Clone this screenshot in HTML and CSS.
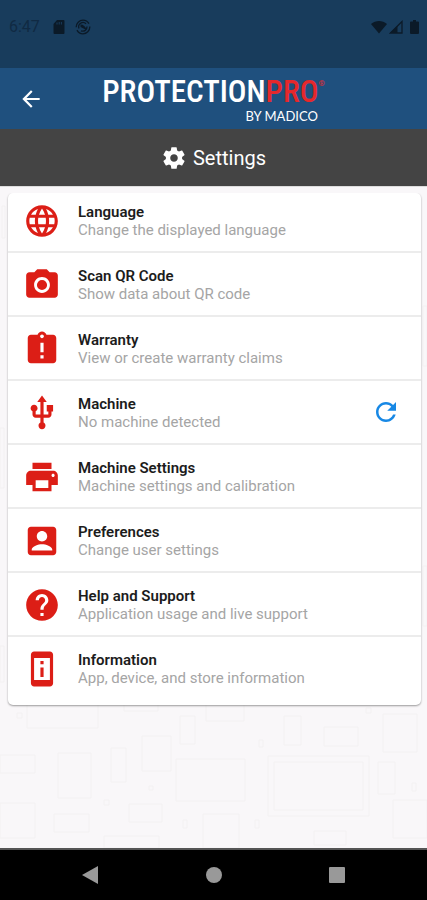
FILE: index.html
```html
<!DOCTYPE html>
<html lang="en">
<head>
<meta charset="utf-8">
<meta name="viewport" content="width=device-width, initial-scale=1">
<title>Settings</title>
<link rel="stylesheet" href="styles.css">
</head>
<body>
<div class="status">
  <span class="time">6:47</span>
  <svg class="status-icon sd" viewBox="0 0 12 14"><path d="M4 0h6.500q1 0 1 1v12q0 1-1 1h-9q-1 0-1-1V4z"/><path class="slot" d="M4 2.500v2M6.200 2v2.500M8.400 2v2.500"/></svg>
  <svg class="status-icon sync" viewBox="0 0 16 16"><circle cx="8" cy="8" r="6.800" fill="none" stroke="currentColor" stroke-width="1.300" stroke-dasharray="18 3"/><path d="M4 9.500a4.300 4.300 0 0 1 7-4.700M12 7.500a4.300 4.300 0 0 1-6 4.300" fill="none" stroke="currentColor" stroke-width="1.300"/><path d="M5.500 5.500c3 0 5 2 6 5l-2-.5-4-2z"/></svg>
  <span class="spacer"></span>
  <svg class="status-icon wifi" viewBox="0 0 16 14"><path d="M8 13.500L0 4C4.500 0 11.500 0 16 4z"/></svg>
  <svg class="status-icon signal" viewBox="0 0 14 14"><path d="M13 1.500V13H1.500z" fill="none" stroke="currentColor" stroke-width="1.300"/><path d="M8.500 6v7H1z"/></svg>
  <svg class="status-icon battery" viewBox="0 0 9 14"><path d="M3 0h3v1.500h2q1 0 1 1V13q0 1-1 1H1q-1 0-1-1V2.500q0-1 1-1h2z"/></svg>
</div>
<header class="appbar">
  <button class="back" type="button" aria-label="Back"><svg viewBox="0 0 24 24"><path d="M20 11H7.830l5.590-5.590L12 4l-8 8 8 8 1.410-1.410L7.830 13H20z"/></svg></button>
  <div class="brand">
    <div class="wordmark">PROTECTION<span class="pro">PRO</span><span class="mark">®</span></div>
    <div class="byline">BY MADICO</div>
  </div>
</header>
<div class="titlebar">
  <svg viewBox="0 0 24 24"><path d="M19.430 12.980c.04-.32.07-.64.07-.98s-.03-.66-.07-.98l2.110-1.650c.19-.15.24-.42.12-.64l-2-3.460c-.12-.22-.39-.3-.61-.22l-2.490 1c-.52-.4-1.080-.73-1.690-.98l-.38-2.650C14.460 2.180 14.250 2 14 2h-4c-.25 0-.46.18-.49.42l-.38 2.650c-.61.25-1.170.59-1.690.98l-2.490-1c-.23-.09-.49 0-.61.22l-2 3.460c-.13.22-.07.49.12.64l2.110 1.650c-.04.32-.07.65-.07.98s.03.66.07.98l-2.110 1.650c-.19.15-.24.42-.12.64l2 3.460c.12.22.39.3.61.22l2.490-1c.52.4 1.080.73 1.690.98l.38 2.650c.03.24.24.42.49.42h4c.25 0 .46-.18.49-.42l.38-2.650c.61-.25 1.170-.59 1.690-.98l2.490 1c.23.09.49 0 .61-.22l2-3.460c.12-.22.07-.49-.12-.64zM12 15.500c-1.930 0-3.500-1.570-3.500-3.500s1.570-3.500 3.500-3.500 3.500 1.570 3.500 3.500-1.570 3.500-3.500 3.500z"/></svg>
  <h1>Settings</h1>
</div>
<main class="content">
  <svg class="pattern" viewBox="0 0 427 662" preserveAspectRatio="xMidYMax slice" aria-hidden="true">
    <path d="M27 500h71v42H27zM124 500h34v25h-34zM180 530h15v28h-15zM206 500h38v35h-38zM0 569h35v18H0zM58 567h33v45H58zM111 562h15v34h-15zM142 550h29v35h-29zM176 573h69v42h-69zM0 617h35v35H0zM54 628h35v18H54zM129 618h33v18h-33zM203 628h36v34h-36zM284 530h17v29h-17zM324 541h34v19h-34zM383 528h34v38h-34zM268 570h101v60H268zM274 576h89v48h-89zM378 576h17v32h-17zM393 614h34v38h-34zM314 645h32v14h-32zM104 650h55v12h-55zM2 20h3v32H2zM0 242h4v60H0zM0 460h4v36H0zM423 120h4v60h-4zM423 380h4v60h-4z"/>
    <path d="M17 527h5v5h-5zM149 600h4v4h-4zM104 614h5v5h-5zM183 634h4v8h-4zM259 554h4v7h-4zM366 522h5v5h-5zM412 597h4v8h-4zM255 634h4v8h-4z"/>
  </svg>
  <ul class="card">
    <li class="row"><a href="#language">
      <svg viewBox="0 0 24 24"><path d="M11.990 2C6.470 2 2 6.480 2 12s4.470 10 9.990 10C17.520 22 22 17.520 22 12S17.520 2 11.990 2zm6.930 6h-2.950c-.32-1.250-.78-2.450-1.380-3.560 1.840.63 3.370 1.910 4.330 3.560zM12 4.040c.83 1.200 1.480 2.530 1.910 3.960h-3.820c.43-1.430 1.080-2.760 1.910-3.960zM4.260 14C4.100 13.360 4 12.690 4 12s.1-1.360.26-2h3.380c-.08.66-.14 1.320-.14 2s.06 1.340.14 2H4.260zm.82 2h2.950c.32 1.250.78 2.450 1.380 3.560-1.840-.63-3.370-1.900-4.330-3.560zm2.950-8H5.080c.96-1.660 2.490-2.930 4.330-3.560C8.810 5.550 8.350 6.750 8.030 8zM12 19.960c-.83-1.200-1.480-2.530-1.910-3.960h3.820c-.43 1.430-1.080 2.760-1.910 3.960zM14.340 14H9.660c-.09-.66-.16-1.320-.16-2s.07-1.350.16-2h4.680c.09.65.16 1.320.16 2s-.07 1.340-.16 2zm.25 5.560c.6-1.110 1.060-2.310 1.380-3.560h2.950c-.96 1.650-2.490 2.930-4.330 3.560zM16.360 14c.08-.66.14-1.320.14-2s-.06-1.340-.14-2h3.380c.16.64.26 1.310.26 2s-.1 1.360-.26 2h-3.380z"/></svg>
      <span class="text"><span class="name">Language</span><span class="desc">Change the displayed language</span></span></a></li>
    <li class="row"><a href="#scan">
      <svg viewBox="0 0 24 24"><path fill-rule="evenodd" d="M9 2L7.170 4H4c-1.100 0-2 .9-2 2v12c0 1.100.9 2 2 2h16c1.100 0 2-.9 2-2V6c0-1.100-.9-2-2-2h-3.170L15 2H9zm3 15c-2.760 0-5-2.240-5-5s2.240-5 5-5 5 2.240 5 5-2.240 5-5 5zM12 8.800a3.200 3.200 0 1 0 0 6.400 3.200 3.200 0 1 0 0-6.400z"/></svg>
      <span class="text"><span class="name">Scan QR Code</span><span class="desc">Show data about QR code</span></span></a></li>
    <li class="row"><a href="#warranty">
      <svg viewBox="0 0 24 24"><path d="M19 3h-4.180C14.400 1.840 13.300 1 12 1c-1.300 0-2.400.84-2.820 2H5c-1.100 0-2 .9-2 2v14c0 1.100.9 2 2 2h14c1.100 0 2-.9 2-2V5c0-1.100-.9-2-2-2zm-6 15h-2v-2h2v2zm0-4h-2V8h2v6zm-1-8.800c-.66 0-1.200-.54-1.200-1.200s.54-1.200 1.200-1.200 1.200.54 1.200 1.200-.54 1.200-1.200 1.200z"/></svg>
      <span class="text"><span class="name">Warranty</span><span class="desc">View or create warranty claims</span></span></a></li>
    <li class="row"><a href="#machine">
      <svg viewBox="0 0 24 24"><path d="M15 7v4h1v2h-3V5h2l-3-4-3 4h2v8H8v-2.070c.7-.37 1.200-1.080 1.200-1.930 0-1.210-.99-2.200-2.200-2.200-1.210 0-2.200.99-2.200 2.200 0 .85.5 1.560 1.200 1.930V13c0 1.110.89 2 2 2h3v3.050c-.71.37-1.200 1.100-1.200 1.950 0 1.220.99 2.200 2.200 2.200 1.210 0 2.200-.98 2.200-2.200 0-.85-.49-1.580-1.200-1.950V15h3c1.110 0 2-.89 2-2v-2h1V7h-4z"/></svg>
      <span class="text"><span class="name">Machine</span><span class="desc">No machine detected</span></span></a>
      <button class="refresh" type="button" aria-label="Refresh"><svg viewBox="0 0 24 24"><path d="M17.650 6.350C16.200 4.900 14.210 4 12 4c-4.420 0-7.990 3.580-7.990 8s3.570 8 7.990 8c3.730 0 6.840-2.550 7.730-6h-2.080c-.82 2.330-3.040 4-5.650 4-3.310 0-6-2.690-6-6s2.690-6 6-6c1.660 0 3.140.69 4.220 1.780L13 11h7V4l-2.350 2.350z"/></svg></button></li>
    <li class="row"><a href="#machine-settings">
      <svg viewBox="0 0 24 24"><path d="M19 8H5c-1.660 0-3 1.340-3 3v6h4v4h12v-4h4v-6c0-1.660-1.340-3-3-3zm-3 11H8v-5h8v5zm3-7c-.55 0-1-.45-1-1s.45-1 1-1 1 .45 1 1-.45 1-1 1zm-1-9H6v4h12V3z"/></svg>
      <span class="text"><span class="name">Machine Settings</span><span class="desc">Machine settings and calibration</span></span></a></li>
    <li class="row"><a href="#preferences">
      <svg viewBox="0 0 24 24"><path fill-rule="evenodd" d="M3 5v14c0 1.100.89 2 2 2h14c1.100 0 2-.9 2-2V5c0-1.100-.9-2-2-2H5c-1.110 0-2 .9-2 2zm12.300 4c0 1.820-1.480 3.300-3.300 3.300S8.700 10.820 8.700 9s1.480-3.300 3.300-3.300 3.300 1.480 3.300 3.300zM5.500 17.500c0-2.300 4.300-3.500 6.500-3.500s6.500 1.200 6.500 3.500v.5h-13v-.5z"/></svg>
      <span class="text"><span class="name">Preferences</span><span class="desc">Change user settings</span></span></a></li>
    <li class="row"><a href="#help">
      <svg viewBox="0 0 24 24"><path d="M12 2C6.480 2 2 6.480 2 12s4.480 10 10 10 10-4.480 10-10S17.520 2 12 2zm1 17h-2v-2h2v2zm2.070-7.750l-.9.92C13.450 12.900 13 13.500 13 15h-2v-.5c0-1.100.45-2.100 1.170-2.830l1.240-1.260c.37-.36.59-.86.59-1.410 0-1.100-.9-2-2-2s-2 .9-2 2H8c0-2.210 1.790-4 4-4s4 1.790 4 4c0 .88-.36 1.680-.93 2.250z"/></svg>
      <span class="text"><span class="name">Help and Support</span><span class="desc">Application usage and live support</span></span></a></li>
    <li class="row"><a href="#information">
      <svg viewBox="0 0 24 24"><path d="M11 11h2v6h-2zM11 7h2v2h-2zM17 1.010L7 1c-1.100 0-2 .9-2 2v18c0 1.100.9 2 2 2h10c1.100 0 2-.9 2-2V3c0-1.100-.9-1.990-2-1.990zM17 19H7V5h10v14z"/></svg>
      <span class="text"><span class="name">Information</span><span class="desc">App, device, and store information</span></span></a></li>
  </ul>
</main>
<nav class="navbar">
  <button type="button" aria-label="Back"><svg viewBox="0 0 20 20"><path d="M17 1v18L1 10z"/></svg></button>
  <button type="button" aria-label="Home"><svg viewBox="0 0 20 20"><circle cx="10" cy="10" r="8"/></svg></button>
  <button type="button" aria-label="Recent apps"><svg viewBox="0 0 20 20"><rect x="2" y="2" width="16" height="16" rx="1"/></svg></button>
</nav>
</body>
</html>
```
FILE: styles.css
```css
* { box-sizing: border-box; }
body {
  margin: 0;
  min-height: 100vh;
  display: flex;
  flex-direction: column;
  background: #f9f7f9;
  font-family: Roboto, "Liberation Sans", sans-serif;
}
svg { display: block; fill: currentColor; }
button { margin: 0; padding: 0; border: 0; background: none; color: inherit; font: inherit; }

.status {
  display: flex;
  align-items: center;
  height: 68px;
  padding: 0 8px 14px 9px;
  background: #183c5c;
  color: #0b1a28;
}
.time { width: 30px; font-size: 16px; line-height: 20px; color: #102a43; }
.status-icon { height: 14px; flex: none; }
.sd { width: 12px; margin-left: 14px; }
.slot { fill: none; stroke: #183c5c; }
.sync { width: 16px; height: 16px; margin-left: 10px; }
.spacer { flex: 1; }
.wifi { width: 16px; }
.signal { width: 14px; margin-left: 2px; }
.battery { width: 9px; margin-left: 7px; }

.appbar {
  display: grid;
  grid-template-columns: 62px 1fr 62px;
  align-items: center;
  height: 61px;
  background: #1f507e;
  color: #fff;
}
.back { justify-self: center; }
.back svg { width: 26px; height: 26px; }
.brand { justify-self: center; padding-bottom: 2px; }
.wordmark {
  display: flex;
  font-family: "Roboto Condensed", "Liberation Sans Narrow", sans-serif;
  font-size: 31px;
  font-weight: 500;
  line-height: 36px;
}
.pro, .mark { color: #e5282c; }
.mark { font-size: 8px; line-height: 20px; }
.byline {
  padding-right: 7px;
  font-family: Lato, sans-serif;
  font-size: 13px;
  line-height: 12px;
  text-align: right;
}

.titlebar {
  display: flex;
  align-items: center;
  justify-content: center;
  gap: 6px;
  height: 57px;
  background: #444;
  color: #fff;
}
.titlebar svg { width: 26px; height: 26px; }
h1 { margin: 0; font-size: 20px; font-weight: 400; line-height: 24px; }

.content {
  position: relative;
  flex: 1;
  padding: 6px 6px 0 8px;
  border-top: 1px solid #ddd;
}
.pattern {
  position: absolute;
  inset: 0;
  width: 100%;
  height: 100%;
  fill: none;
  stroke: #f3f1f2;
  stroke-width: 1;
}
.card {
  position: relative;
  margin: 0;
  padding: 0 0 4px;
  list-style: none;
  border-radius: 5px;
  background: #fff;
  box-shadow: 0 1px 2px rgba(0, 0, 0, .38);
  clip-path: inset(0 -4px -4px -4px);
}
.row { display: flex; align-items: center; border-bottom: 2px solid #ececec; }
.row:last-child { border-bottom-color: transparent; }
.row:first-child a { padding-top: 9px; }
.row a {
  display: flex;
  align-items: center;
  gap: 17px;
  flex: 1;
  padding: 13px 0 11px 15px;
  color: inherit;
  text-decoration: none;
}
.row a svg { width: 38px; height: 38px; color: #dc1e16; }
.text { display: flex; flex-direction: column; }
.name { font-size: 15px; font-weight: 600; line-height: 17px; color: #1c1c1c; }
.desc { font-size: 15px; line-height: 18px; color: #a5a5a5; }
.refresh { padding-right: 20px; color: #1788e5; }
.refresh svg { width: 30px; height: 30px; }

.navbar {
  display: grid;
  grid-template-columns: repeat(3, 123px);
  justify-content: center;
  align-items: center;
  height: 52px;
  border-top: 2px solid #555;
  background: #000;
  color: #999;
}
.navbar button { justify-self: center; }
.navbar svg { width: 20px; height: 20px; }
```
